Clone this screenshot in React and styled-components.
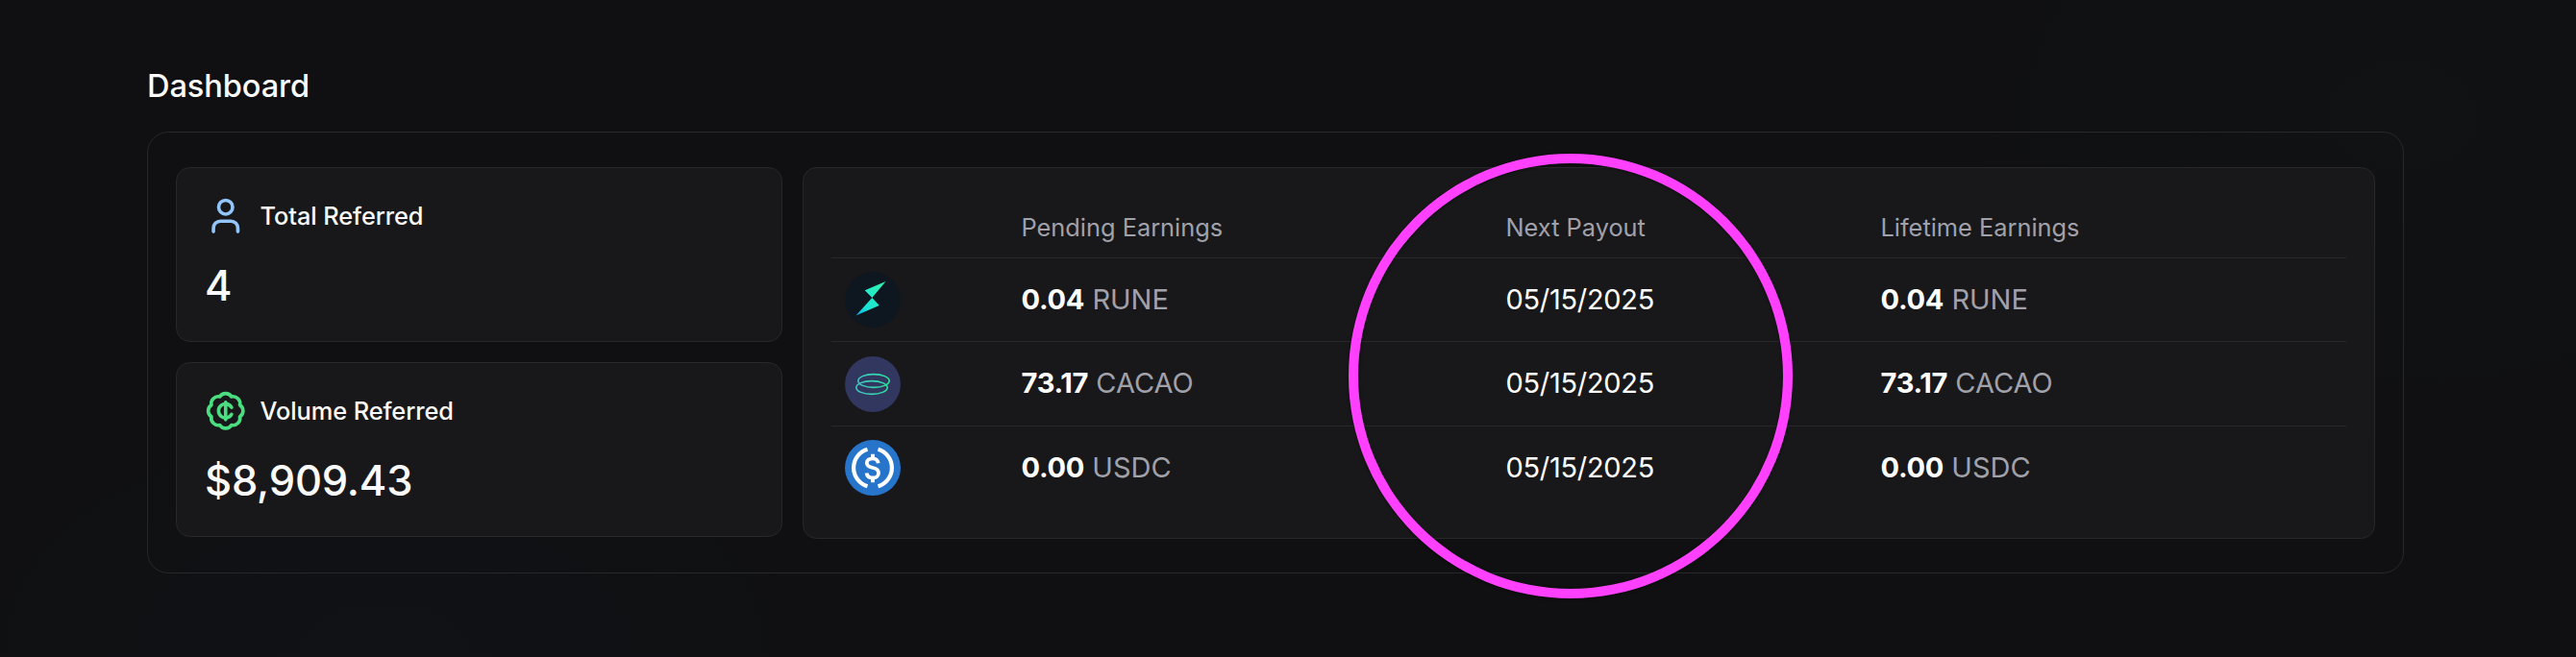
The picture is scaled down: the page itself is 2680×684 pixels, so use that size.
import React from 'react';
import { User, BadgeCent } from 'lucide-react';
import styled, { createGlobalStyle } from 'styled-components';

const earnings = [
  { asset: 'RUNE', pending: '0.04', payout: '05/15/2025', lifetime: '0.04', icon: RuneIcon },
  { asset: 'CACAO', pending: '73.17', payout: '05/15/2025', lifetime: '73.17', icon: CacaoIcon },
  { asset: 'USDC', pending: '0.00', payout: '05/15/2025', lifetime: '0.00', icon: UsdcIcon },
];

export default function App() {
  return (
    <>
      <GlobalStyle />
      <Page>
        <Title>Dashboard</Title>
        <Board>
          <Stats>
            <StatCard icon={<User size={43.5} color='#93c5fd' />} label='Total Referred' value='4' />
            <StatCard icon={<BadgeCent size={43.5} color='#4ade80' />} label='Volume Referred' value='$8,909.43' />
          </Stats>
          <EarningsPanel>
            <HeadRow>
              <Cell />
              <Cell>Pending Earnings</Cell>
              <Cell>Next Payout</Cell>
              <Cell>Lifetime Earnings</Cell>
            </HeadRow>
            {earnings.map(({ asset, pending, payout, lifetime, icon: Icon }) => (
              <Row key={asset}>
                <Cell><Icon /></Cell>
                <ValueCell><Amount value={pending} asset={asset} /></ValueCell>
                <ValueCell><Payout>{payout}</Payout></ValueCell>
                <ValueCell><Amount value={lifetime} asset={asset} /></ValueCell>
              </Row>
            ))}
          </EarningsPanel>
        </Board>
        <Highlight />
      </Page>
    </>
  );
}

function StatCard({ icon, label, value }) {
  return (
    <StatWrapper>
      <StatHead>
        {icon}
        <span>{label}</span>
      </StatHead>
      <StatValue>{value}</StatValue>
    </StatWrapper>
  );
}

function Amount({ value, asset }) {
  return (
    <Ticker><strong>{value}</strong> {asset}</Ticker>
  );
}

function RuneIcon() {
  return (
    <TokenIcon viewBox='0 0 58 58'>
      <defs>
        <linearGradient id='rune' gradientUnits='userSpaceOnUse' x1='11' y1='46' x2='42' y2='10'>
          <stop offset='0' stopColor='#0aa5ee' />
          <stop offset='.28' stopColor='#1ae3d5' />
          <stop offset='1' stopColor='#30f5b0' />
        </linearGradient>
      </defs>
      <circle cx='29' cy='29' r='29' fill='#0e171f' />
      <path d='M42.5 10 20.7 19.3 28.3 27ZM28.3 27 35.8 35 11.5 45.5Z' fill='url(#rune)' />
    </TokenIcon>
  );
}

function CacaoIcon() {
  return (
    <TokenIcon viewBox='0 0 58 58'>
      <defs>
        <linearGradient id='cacao' gradientUnits='userSpaceOnUse' x1='11' y1='0' x2='47' y2='0'>
          <stop offset='0' stopColor='#3fc4c8' />
          <stop offset='1' stopColor='#2de39a' />
        </linearGradient>
      </defs>
      <circle cx='29' cy='29' r='29' fill='#31375f' />
      <g fill='none' stroke='url(#cacao)' strokeWidth='1.6'>
        <ellipse cx='30' cy='25.5' rx='16.2' ry='6.9' />
        <ellipse cx='28' cy='32.5' rx='16.2' ry='6.9' />
      </g>
    </TokenIcon>
  );
}

function UsdcIcon() {
  return (
    <TokenIcon viewBox='0 0 58 58'>
      <circle cx='29' cy='29' r='29' fill='#2775ca' />
      <g fill='none' stroke='#fff' strokeWidth='3.8'>
        <path strokeWidth='4.2' d='M23.5 9.8A20 20 0 0 0 23.5 48.2M34.5 9.8A20 20 0 0 1 34.5 48.2' />
        <path d='M34.7 24.3C34.2 21 32 19.4 29 19.4 25.3 19.4 22.8 21.2 22.8 24 22.8 27.3 25.5 28.3 29 29 32.5 29.7 35 31 35 34.4 35 37.6 32.3 39.5 29 39.5 25.3 39.5 23 37.6 22.6 34.5' />
        <path d='M29 14.8V19M29 39.5V44.2' />
      </g>
    </TokenIcon>
  );
}

const GlobalStyle = createGlobalStyle`
  *{
    box-sizing:border-box;
  }
  body{
    margin:0;
    background:#101012;
    color:#fafafa;
    font-family:Inter, "Liberation Sans", sans-serif;
    font-size:29px;
  }
`

const Page = styled.main`
  position:relative;
  height:684px;
  padding:60px 179px 0 153px;
  overflow:hidden;
  background:
    radial-gradient(ellipse 500px 300px at 400px 684px, rgba(20, 45, 70, .07), transparent),
    radial-gradient(ellipse 500px 350px at 2500px 120px, rgba(20, 50, 60, .06), transparent),
    #101012;
`

const Title = styled.h1`
  margin:0 0 19px;
  font-size:32.6px;
  font-weight:500;
  line-height:58px;
  letter-spacing:-.1px;
`

const Board = styled.section`
  display:grid;
  grid-template-columns:631px 1fr;
  gap:21px;
  height:460px;
  padding:36px 29px;
  border:1px solid #28282a;
  border-radius:22px;
`

const Stats = styled.div`
  display:flex;
  flex-direction:column;
  gap:21px;
`

const Card = styled.div`
  background:#18181a;
  border:1px solid #28282a;
  border-radius:14.5px;
`

const StatWrapper = styled(Card)`
  height:182px;
  padding:27.5px 29px 0;
`

const StatHead = styled.div`
  display:flex;
  align-items:center;
  gap:14px;
  height:43.5px;
  font-size:25.375px;
  font-weight:500;
  letter-spacing:-.08px;
`

const StatValue = styled.div`
  margin-top:25px;
  font-size:43.5px;
  font-weight:500;
  line-height:52px;
  letter-spacing:-.2px;
`

const EarningsPanel = styled(Card)`
  padding:29px;
`

const Row = styled.div`
  display:grid;
  grid-template-columns:183.5px 504px 390px 1fr;
  align-items:center;
  height:87.4px;
  border-bottom:1px solid #28282a;
    &:last-child{
      border-bottom:none;
    }
`

const HeadRow = styled(Row)`
  height:65px;
  color:#a1a1aa;
  font-size:25.375px;
`

const Cell = styled.div`
  padding:0 14px;
`

const ValueCell = styled(Cell)`
  padding-bottom:2px;
`

const Ticker = styled.span`
  color:#a1a1aa;
    strong{
      color:#fff;
      font-weight:700;
      letter-spacing:-.25px;
    }
`

const Payout = styled.span`
  color:#fff;
  letter-spacing:-.3px;
`

const TokenIcon = styled.svg`
  display:block;
  width:58px;
  height:58px;
`

const Highlight = styled.div`
  position:absolute;
  left:1403px;
  top:160px;
  width:462px;
  height:463px;
  border:10px solid #ff40ff;
  border-radius:50%;
  box-shadow:0 1px 3px rgba(0, 0, 0, .5), inset 0 1px 3px rgba(0, 0, 0, .5);
`
